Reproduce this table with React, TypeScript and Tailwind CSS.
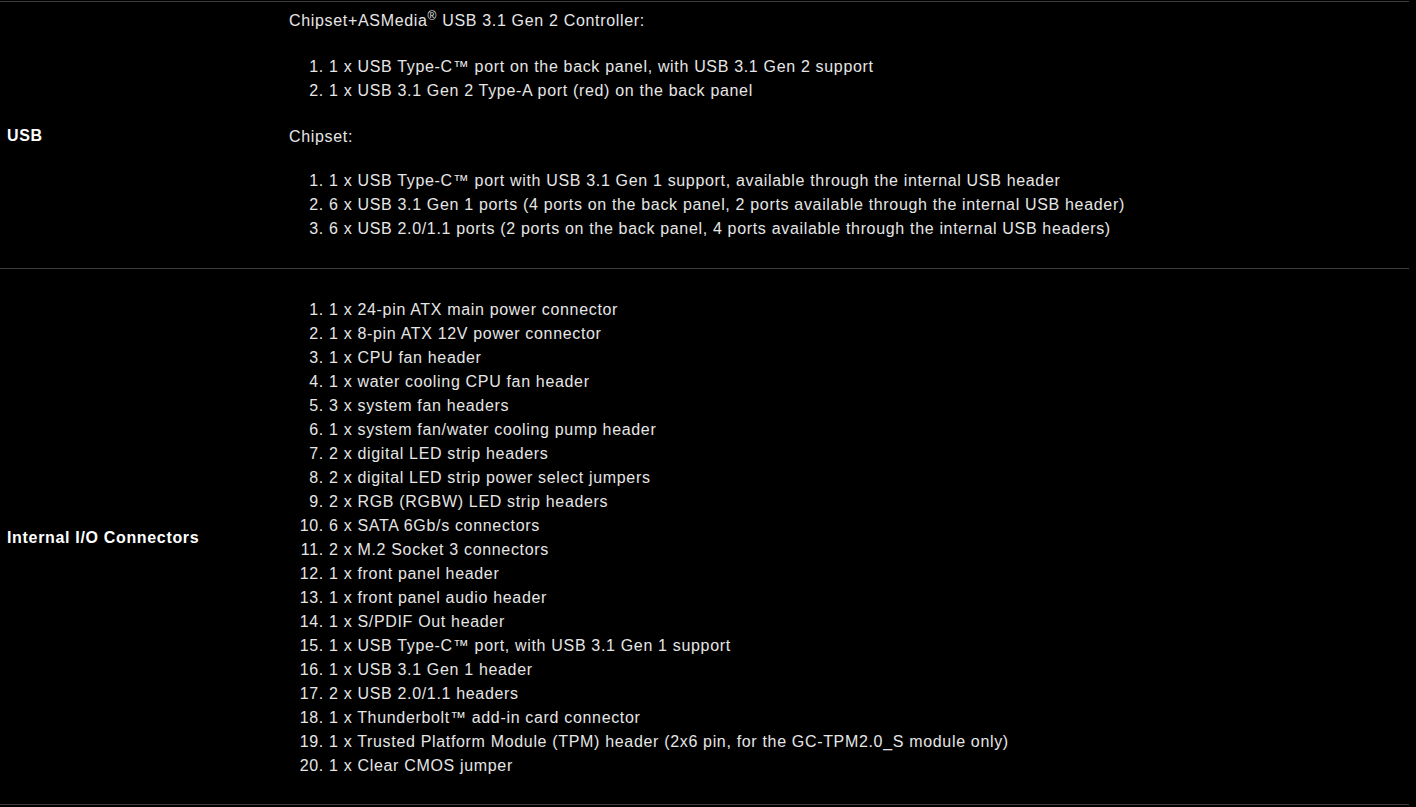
const usbA = [
  "1 x USB Type-C™ port on the back panel, with USB 3.1 Gen 2 support",
  "1 x USB 3.1 Gen 2 Type-A port (red) on the back panel",
];

const usbChipset = [
  "1 x USB Type-C™ port with USB 3.1 Gen 1 support, available through the internal USB header",
  "6 x USB 3.1 Gen 1 ports (4 ports on the back panel, 2 ports available through the internal USB header)",
  "6 x USB 2.0/1.1 ports (2 ports on the back panel, 4 ports available through the internal USB headers)",
];

const internalIO = [
  "1 x 24-pin ATX main power connector",
  "1 x 8-pin ATX 12V power connector",
  "1 x CPU fan header",
  "1 x water cooling CPU fan header",
  "3 x system fan headers",
  "1 x system fan/water cooling pump header",
  "2 x digital LED strip headers",
  "2 x digital LED strip power select jumpers",
  "2 x RGB (RGBW) LED strip headers",
  "6 x SATA 6Gb/s connectors",
  "2 x M.2 Socket 3 connectors",
  "1 x front panel header",
  "1 x front panel audio header",
  "1 x S/PDIF Out header",
  "1 x USB Type-C™ port, with USB 3.1 Gen 1 support",
  "1 x USB 3.1 Gen 1 header",
  "2 x USB 2.0/1.1 headers",
  "1 x Thunderbolt™ add-in card connector",
  "1 x Trusted Platform Module (TPM) header (2x6 pin, for the GC-TPM2.0_S module only)",
  "1 x Clear CMOS jumper",
];

function SpecList({ items, className = "" }: { items: string[]; className?: string }) {
  return (
    <ol className={`list-decimal pl-[40px] ${className}`}>
      {items.map((item) => (
        <li key={item}>{item}</li>
      ))}
    </ol>
  );
}

function SpecRow({ label, children, className = "" }: { label: string; children: React.ReactNode; className?: string }) {
  return (
    <div className="grid grid-cols-[282px_1fr] border-t border-[#3d3d3d]">
      <div className="flex items-center pl-[7px] pt-[2px] font-bold text-white">{label}</div>
      <div className={`pl-[7px] text-[#e6e6e6] ${className}`}>{children}</div>
    </div>
  );
}

export default function App() {
  return (
    <div className="min-h-[807px] bg-black pt-px font-['Liberation_Sans',Arial,sans-serif] text-[16px] leading-[24px] tracking-[0.67px]">
      <div className="w-[1409px] border-b border-[#3d3d3d]">
        <SpecRow label="USB" className="pt-[7px] pb-[27px]">
          <p>
            Chipset+ASMedia<sup>®</sup> USB 3.1 Gen 2 Controller:
          </p>
          <SpecList items={usbA} className="mt-[22px]" />
          <p className="mt-[22px]">Chipset:</p>
          <SpecList items={usbChipset} className="mt-[20px]" />
        </SpecRow>
        <SpecRow label="Internal I/O Connectors" className="pt-[29px] pb-[26px]">
          <SpecList items={internalIO} />
        </SpecRow>
      </div>
    </div>
  );
}
